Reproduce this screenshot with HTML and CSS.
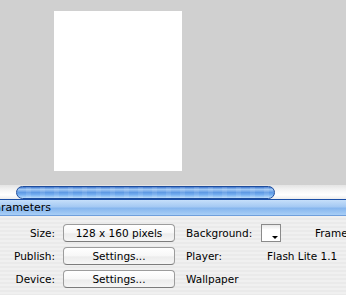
FILE: index.html
```html
<!DOCTYPE html>
<html lang="en">
<head>
    <meta charset="UTF-8">
    <title>Stage | Parameters</title>
    <link rel="stylesheet" href="styles.css">
</head>
<body>
    <div class="stage">
        <div class="canvas"></div>
    </div>
    <div class="scrollbar">
        <div class="thumb"></div>
    </div>
    <div class="panel-header">
        <span class="panel-title">Parameters</span>
    </div>
    <div class="panel">
        <div class="row">
            <span class="label">Size:</span>
            <button class="aqua-button">128 x 160 pixels</button>
            <span class="field-name bg-name">Background:</span>
            <span class="swatch"><span class="swatch-arrow"></span></span>
            <span class="frame-name">Frame</span>
        </div>
        <div class="row">
            <span class="label">Publish:</span>
            <button class="aqua-button">Settings...</button>
            <span class="field-name player-name">Player:</span>
            <span class="value">Flash Lite 1.1</span>
        </div>
        <div class="row">
            <span class="label">Device:</span>
            <button class="aqua-button">Settings...</button>
            <span class="field-name">Wallpaper</span>
        </div>
    </div>
</body>
</html>
```

FILE: styles.css
```css
body {
    margin: 0;
    width: 346px;
    height: 295px;
    overflow: hidden;
    background-color: #d0d0d0;
    font-family: 'DejaVu Sans', sans-serif;
    font-size: 10.5px;
    color: #000;
}

.stage {
    height: 185px;
    padding-top: 11px;
    padding-left: 54px;
    box-sizing: border-box;
}

.canvas {
    width: 128px;
    height: 160px;
    background-color: #fff;
}

/* horizontal scroller under the stage */
.scrollbar {
    height: 14px;
    background: linear-gradient(#e4e4e4, #f6f6f6 40%, #ffffff 70%, #ececec);
    padding-left: 16px;
    padding-top: 1px;
    box-sizing: border-box;
}

.thumb {
    width: 259px;
    height: 13px;
    box-sizing: border-box;
    border: 1px solid #1f4d9c;
    border-radius: 7px;
    background:
        repeating-linear-gradient(90deg, rgba(255,255,255,0) 0 9px, rgba(255,255,255,0.1) 9px 14px),
        linear-gradient(#3b74cc, #a2c8f3 22%, #5f9ae4 50%, #74aef0 70%, #b9dcfb);
}

.panel-header {
    height: 15px;
    border-top: 1px solid #1a4ea6;
    border-bottom: 1px solid #6f9fdc;
    background: linear-gradient(#c6dffa, #a4c9f3 45%, #86b6ee 55%, #a8cef6);
    line-height: 14px;
    overflow: hidden;
    white-space: nowrap;
}

.panel-title {
    display: inline-block;
    margin-left: -12px;
    font-size: 11px;
}

.panel {
    height: 80px;
    padding-top: 8px;
    background: repeating-linear-gradient(#f0f0f0 0 2px, #eaeaea 2px 4px);
    display: flex;
    flex-direction: column;
    gap: 5px;
}

.row {
    display: flex;
    align-items: center;
    height: 18px;
    white-space: nowrap;
}

.row > * {
    flex-shrink: 0;
}

.label {
    width: 55px;
    text-align: right;
}

.aqua-button {
    margin-left: 8px;
    width: 112px;
    height: 18px;
    padding: 0;
    border: 1px solid #9c9c9c;
    border-bottom-color: #7c7c7c;
    border-radius: 4px;
    background: linear-gradient(#ffffff, #f7f7f7 50%, #ececec 55%, #f6f6f6);
    font-family: inherit;
    font-size: 10.5px;
    color: #000;
}

.field-name {
    margin-left: 11px;
}

.bg-name {
    width: 75px;
}

.player-name {
    width: 81px;
}

.swatch {
    position: relative;
    width: 20px;
    height: 18px;
    box-sizing: border-box;
    border: 1px solid #8a8a8a;
    background: linear-gradient(#e8e8e8, #ffffff 30%);
}

.swatch-arrow {
    position: absolute;
    right: 2px;
    bottom: 2px;
    border-left: 3px solid transparent;
    border-right: 3px solid transparent;
    border-top: 3px solid #000;
}

.frame-name {
    margin-left: 34px;
}
```
